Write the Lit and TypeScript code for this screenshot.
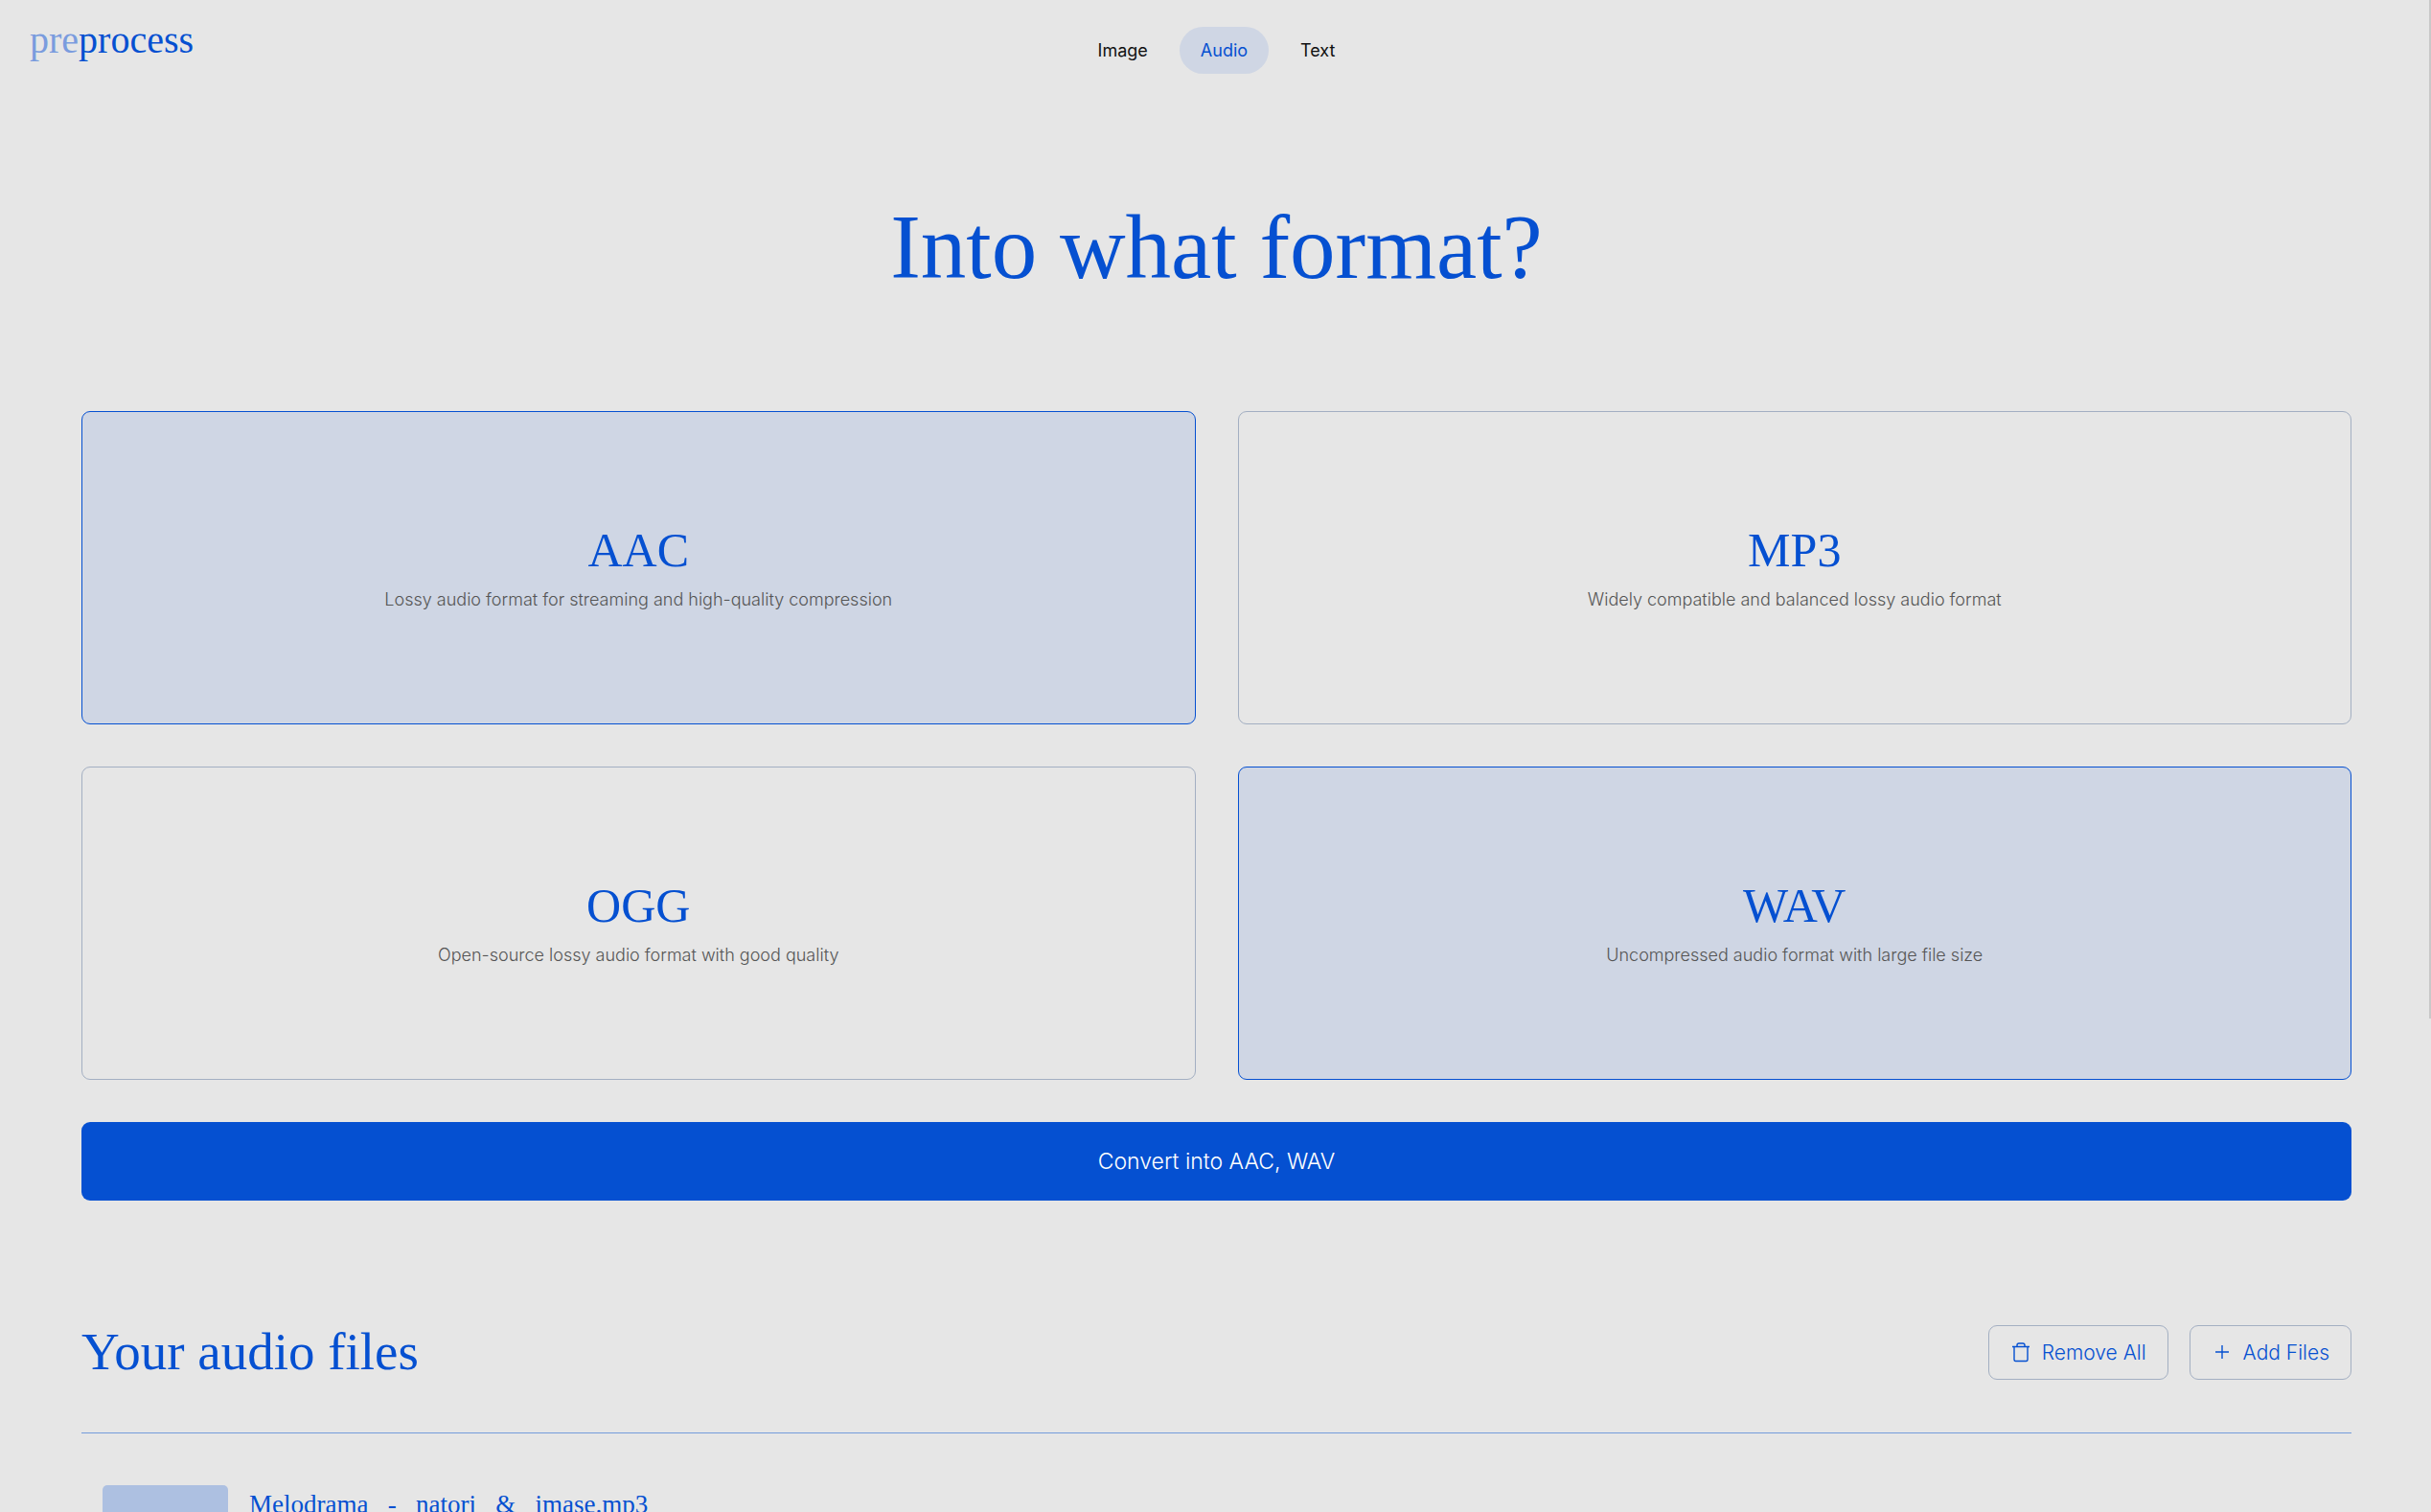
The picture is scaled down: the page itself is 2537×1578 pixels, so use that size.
import { LitElement, html, css } from "lit";
import { customElement, state } from "lit/decorators.js";
import { classMap } from "lit/directives/class-map.js";

interface Format {
  name: string;
  description: string;
}

const FORMATS: Format[] = [
  { name: "AAC", description: "Lossy audio format for streaming and high-quality compression" },
  { name: "MP3", description: "Widely compatible and balanced lossy audio format" },
  { name: "OGG", description: "Open-source lossy audio format with good quality" },
  { name: "WAV", description: "Uncompressed audio format with large file size" },
];

const SECTIONS = ["Image", "Audio", "Text"];

@customElement("app-root")
export class AppRoot extends LitElement {
  static styles = css`
    :host {
      --blue: #0550d1;
      --tint: #cfd6e4;
      --line: #a3afc2;
      --serif: "Liberation Serif", serif;
      display: block;
      height: 100vh;
      overflow: hidden;
      background: #e6e6e6;
      color: #111;
      font-family: Inter, "Liberation Sans", sans-serif;
    }
    * {
      box-sizing: border-box;
      margin: 0;
    }
    button {
      font-family: inherit;
      cursor: pointer;
    }
    .header {
      display: grid;
      grid-template-columns: 1fr auto 1fr;
      align-items: center;
      height: 104px;
      padding: 0 29px 0 31px;
    }
    .logo {
      justify-self: start;
      padding-bottom: 20px;
      color: var(--blue);
      font: 40px/44px var(--serif);
      text-decoration: none;
    }
    .logo-pre {
      color: #7a9cde;
    }
    .nav {
      display: flex;
      gap: 11px;
    }
    .nav-link {
      padding: 12px 22px;
      border-radius: 25px;
      color: #111;
      font-size: 18px;
      line-height: 25px;
      text-decoration: none;
    }
    .nav-link.active {
      background: var(--tint);
      color: var(--blue);
    }
    .main {
      padding: 0 83px 0 85px;
    }
    .title {
      padding: 98px 0 115px;
      color: var(--blue);
      font: 95px/112px var(--serif);
      text-align: center;
    }
    .formats {
      display: grid;
      grid-template-columns: 1fr 1fr;
      gap: 44px;
    }
    .card {
      display: flex;
      flex-direction: column;
      align-items: center;
      justify-content: center;
      gap: 11px;
      height: 327px;
      padding: 0 24px;
      border: 1px solid var(--line);
      border-radius: 9px;
      background: none;
    }
    .card.selected {
      border-color: var(--blue);
      background: var(--tint);
    }
    .card-name {
      color: var(--blue);
      font: 50px/56px var(--serif);
    }
    .card-text {
      color: #555;
      font-size: 18px;
      font-weight: 300;
      line-height: 26px;
    }
    .convert {
      width: 100%;
      height: 82px;
      margin-top: 44px;
      border: 0;
      border-radius: 9px;
      background: var(--blue);
      color: #fff;
      font-size: 23px;
      font-weight: 300;
    }
    .files-head {
      display: flex;
      align-items: center;
      justify-content: space-between;
      margin-top: 128px;
      padding-bottom: 54px;
      border-bottom: 1px solid #739bdb;
    }
    .files-title {
      color: var(--blue);
      font: 55px/60px var(--serif);
    }
    .actions {
      display: flex;
      gap: 22px;
    }
    .action {
      display: flex;
      align-items: center;
      gap: 11px;
      height: 57px;
      padding: 0 22px;
      border: 1px solid var(--line);
      border-radius: 9px;
      background: none;
      color: var(--blue);
      font-size: 21px;
      font-weight: 300;
    }
    .icon {
      width: 22px;
      height: 22px;
      fill: none;
      stroke: currentColor;
      stroke-width: 1.4;
    }
    .file {
      display: flex;
      gap: 22px;
      padding: 54px 22px 0;
    }
    .thumb {
      width: 131px;
      height: 131px;
      border-radius: 5px;
      background: #adc0e1;
    }
    .file-name {
      color: var(--blue);
      font: 27px/32px var(--serif);
      white-space: pre;
      padding-top: 4px;
    }
    .scroll-thumb {
      position: absolute;
      top: 0;
      right: 0;
      width: 2px;
      height: 1063px;
      background: #c8c8c8;
    }
  `;

  @state() private selected: string[] = ["AAC", "WAV"];

  private toggle(name: string) {
    this.selected = FORMATS.map((f) => f.name).filter(
      (n) => this.selected.includes(n) !== (n === name)
    );
  }

  render() {
    return html`
      <header class="header">
        <a class="logo" href="#"><span class="logo-pre">pre</span>process</a>
        <nav class="nav">
          ${SECTIONS.map(
            (s) => html`<a class=${classMap({ "nav-link": true, active: s === "Audio" })} href="#">${s}</a>`
          )}
        </nav>
      </header>
      <main class="main">
        <h1 class="title">Into what format?</h1>
        <div class="formats">
          ${FORMATS.map(
            (f) => html`
              <button
                class=${classMap({ card: true, selected: this.selected.includes(f.name) })}
                aria-pressed=${this.selected.includes(f.name)}
                @click=${() => this.toggle(f.name)}
              >
                <span class="card-name">${f.name}</span>
                <span class="card-text">${f.description}</span>
              </button>
            `
          )}
        </div>
        <button class="convert">Convert into ${this.selected.join(", ")}</button>
        <section>
          <div class="files-head">
            <h2 class="files-title">Your audio files</h2>
            <div class="actions">
              <button class="action">
                <svg class="icon" viewBox="0 0 22 22" aria-hidden="true">
                  <path d="M2 5.5h18M7 5.5V4a2 2 0 0 1 2-2h4a2 2 0 0 1 2 2v1.5M4 5.5v13.5a1.5 1.5 0 0 0 1.5 1.5h11a1.5 1.5 0 0 0 1.5-1.5V5.5" />
                </svg>
                Remove All
              </button>
              <button class="action">
                <svg class="icon" viewBox="0 0 22 22" aria-hidden="true">
                  <path d="M4 11h14M11 4v14" />
                </svg>
                Add Files
              </button>
            </div>
          </div>
          <div class="file">
            <div class="thumb"></div>
            <h3 class="file-name">${"Melodrama   -   natori   &   imase.mp3"}</h3>
          </div>
        </section>
      </main>
      <div class="scroll-thumb"></div>
    `;
  }
}
